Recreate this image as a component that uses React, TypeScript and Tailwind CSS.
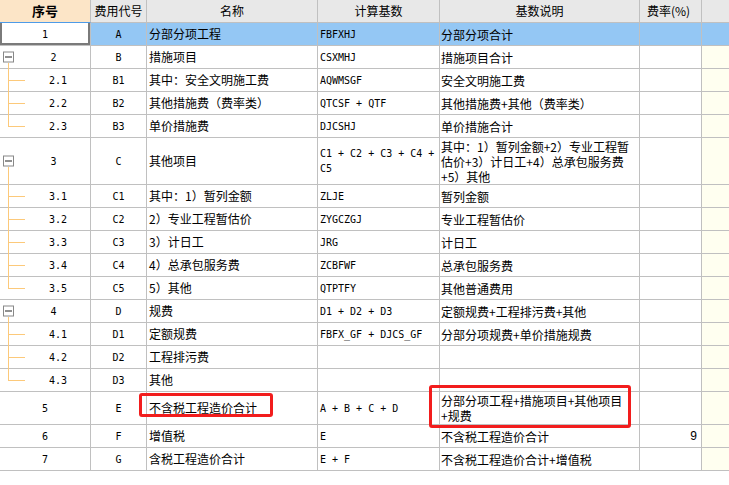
import React from "react";

type Row = {
  no: string;
  code: string;
  name: string;
  base: string[];
  desc: string[];
  rate?: string;
  kind: "top" | "parent" | "child" | "last";
  h: string;
  sel?: boolean;
};

const rows: Row[] = [
  { no: "1", code: "A", name: "分部分项工程", base: ["FBFXHJ"], desc: ["分部分项合计"], kind: "top", h: "h-[23px]", sel: true },
  { no: "2", code: "B", name: "措施项目", base: ["CSXMHJ"], desc: ["措施项目合计"], kind: "parent", h: "h-[23px]" },
  { no: "2.1", code: "B1", name: "其中：安全文明施工费", base: ["AQWMSGF"], desc: ["安全文明施工费"], kind: "child", h: "h-[23px]" },
  { no: "2.2", code: "B2", name: "其他措施费（费率类）", base: ["QTCSF + QTF"], desc: ["其他措施费+其他（费率类）"], kind: "child", h: "h-[23px]" },
  { no: "2.3", code: "B3", name: "单价措施费", base: ["DJCSHJ"], desc: ["单价措施合计"], kind: "last", h: "h-[23px]" },
  {
    no: "3",
    code: "C",
    name: "其他项目",
    base: ["C1 + C2 + C3 + C4 +", "C5"],
    desc: ["其中：1）暂列金额+2）专业工程暂", "估价+3）计日工+4）总承包服务费", "+5）其他"],
    kind: "parent",
    h: "h-[47px]",
  },
  { no: "3.1", code: "C1", name: "其中：1）暂列金额", base: ["ZLJE"], desc: ["暂列金额"], kind: "child", h: "h-[23px]" },
  { no: "3.2", code: "C2", name: "2）专业工程暂估价", base: ["ZYGCZGJ"], desc: ["专业工程暂估价"], kind: "child", h: "h-[23px]" },
  { no: "3.3", code: "C3", name: "3）计日工", base: ["JRG"], desc: ["计日工"], kind: "child", h: "h-[23px]" },
  { no: "3.4", code: "C4", name: "4）总承包服务费", base: ["ZCBFWF"], desc: ["总承包服务费"], kind: "child", h: "h-[23px]" },
  { no: "3.5", code: "C5", name: "5）其他", base: ["QTPTFY"], desc: ["其他普通费用"], kind: "last", h: "h-[23px]" },
  { no: "4", code: "D", name: "规费", base: ["D1 + D2 + D3"], desc: ["定额规费+工程排污费+其他"], kind: "parent", h: "h-[23px]" },
  { no: "4.1", code: "D1", name: "定额规费", base: ["FBFX_GF + DJCS_GF"], desc: ["分部分项规费+单价措施规费"], kind: "child", h: "h-[23px]" },
  { no: "4.2", code: "D2", name: "工程排污费", base: [], desc: [], kind: "child", h: "h-[23px]" },
  { no: "4.3", code: "D3", name: "其他", base: [], desc: [], kind: "last", h: "h-[23px]" },
  { no: "5", code: "E", name: "不含税工程造价合计", base: ["A + B + C + D"], desc: ["分部分项工程+措施项目+其他项目", "+规费"], kind: "top", h: "h-[33px]" },
  { no: "6", code: "F", name: "增值税", base: ["E"], desc: ["不含税工程造价合计"], rate: "9", kind: "top", h: "h-[23px]" },
  { no: "7", code: "G", name: "含税工程造价合计", base: ["E + F"], desc: ["不含税工程造价合计+增值税"], kind: "top", h: "h-[23px]" },
];

const cjk = "font-['Noto_Sans_CJK_SC',sans-serif] text-[12px]";
const mono = "font-['DejaVu_Sans_Mono',monospace] text-[10px] whitespace-pre";
const cell = "border-r border-b border-[#c0c0c0] flex items-center";

function TreeNo({ r }: { r: Row }) {
  const rowBg = r.sel ? "bg-white shadow-[inset_-2px_-2px_0_#7a7a7a,inset_2px_0_0_#7a7a7a]" : "";
  return (
    <div className={`${cell} ${r.h} ${rowBg} relative justify-center ${mono} ${r.kind === "parent" ? "pl-[17px]" : r.kind === "top" ? "" : "pl-[26px]"}`}>
      {r.kind === "parent" && (
        <>
          <span className="absolute left-[3px] top-1/2 -translate-y-1/2 w-[11px] h-[11px] border border-[#888] bg-white flex items-center justify-center">
            <span className="w-[7px] h-px bg-[#222]" />
          </span>
          <span className="absolute left-[8px] top-[calc(50%+6px)] bottom-[-1px] w-px bg-[#fcc97a]" />
        </>
      )}
      {(r.kind === "child" || r.kind === "last") && (
        <>
          <span className={`absolute left-[8px] top-0 w-px bg-[#fcc97a] ${r.kind === "child" ? "bottom-[-1px]" : "h-1/2"}`} />
          <span className="absolute left-[8px] top-1/2 w-[17px] h-px bg-[#fcc97a]" />
        </>
      )}
      <span>{r.no}</span>
    </div>
  );
}

export default function App() {
  return (
    <div className="w-[729px] h-[485px] bg-white overflow-hidden text-black">
      <div className="relative">
        <div className={`grid grid-cols-[91px_56px_171px_122px_200px_62px_1fr] ${cjk}`}>
          {/* header */}
          <div className="h-[23px] bg-[#fce5c7] border-r border-[#c0c0c0] border-b border-b-[#4d9be8] flex items-center justify-center font-bold text-[13px]">序号</div>
          <div className="h-[23px] bg-[#e8e8e8] border-r border-b border-[#c0c0c0] flex items-center justify-center">费用代号</div>
          <div className="h-[23px] bg-[#e8e8e8] border-r border-b border-[#c0c0c0] flex items-center justify-center">名称</div>
          <div className="h-[23px] bg-[#e8e8e8] border-r border-b border-[#c0c0c0] flex items-center justify-center">计算基数</div>
          <div className="h-[23px] bg-[#e8e8e8] border-r border-b border-[#c0c0c0] flex items-center justify-center">基数说明</div>
          <div className="h-[23px] bg-[#e8e8e8] border-r border-b border-[#c0c0c0] flex items-center justify-center pr-[4px]">费率(%)</div>
          <div className="h-[23px] bg-[#e8e8e8] border-b border-[#c0c0c0]" />

          {rows.map((r) => {
            const bg = r.sel ? "bg-[#94c7f4]" : "bg-white";
            return (
              <React.Fragment key={r.no}>
                <TreeNo r={r} />
                <div className={`${cell} ${r.h} ${bg} justify-center ${mono}`}>{r.code}</div>
                <div className={`${cell} ${r.h} ${bg} pl-[2px] whitespace-nowrap`}>{r.name}</div>
                <div className={`${cell} ${r.h} ${bg} pl-[2px]`}>
                  <div className={`${mono} leading-[15px]`}>
                    {r.base.map((b) => (
                      <div key={b}>{b}</div>
                    ))}
                  </div>
                </div>
                <div className={`${cell} ${r.h} ${bg} pl-[1px]`}>
                  <div className="leading-[15px] whitespace-nowrap">
                    {r.desc.map((d) => (
                      <div key={d}>{d}</div>
                    ))}
                  </div>
                </div>
                <div className={`${cell} ${r.h} ${bg} justify-end pr-[4px] font-['Liberation_Sans',sans-serif]`}>{r.rate}</div>
                <div className={`border-b border-[#c0c0c0] ${r.h} ${r.sel ? "bg-[#94c7f4]" : "bg-[#fffff0]"}`} />
              </React.Fragment>
            );
          })}
        </div>

        {/* red annotation boxes */}
        <div className="absolute left-[139px] top-[393px] w-[134px] h-[24px] border-[3px] border-[#f21d1d] rounded-[3px]" />
        <div className="absolute left-[429px] top-[385px] w-[202px] h-[43px] border-[3px] border-[#f21d1d] rounded-[3px]" />
      </div>
    </div>
  );
}
